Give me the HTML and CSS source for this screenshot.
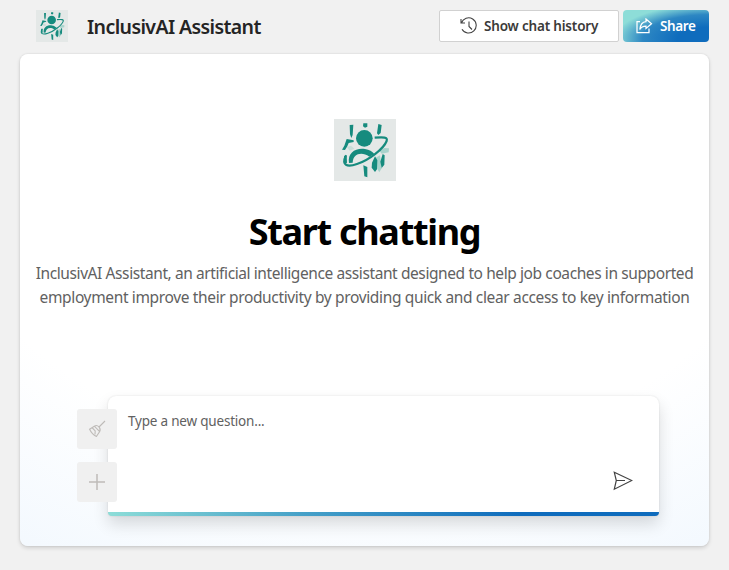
FILE: index.html
```html
<!DOCTYPE html>
<html lang="en">
<head>
<meta charset="utf-8">
<title>InclusivAI Assistant</title>
<link rel="stylesheet" href="styles.css">
</head>
<body>
<svg class="defs" width="0" height="0">
  <symbol id="logo" viewBox="0 0 186 186">
    <rect width="186" height="186" fill="#e4e8e7"/>
    <g fill="#a9d3cc">
      <path d="M151 87l14 1-1 12-21 4-7-9z"/>
      <path d="M124 117l14-8 5 39-7 12-13-21z"/>
      <path d="M39 84l12-4 10 9-14 6z" opacity=".5"/>
    </g>
    <g fill="#168b7e">
      <circle cx="91" cy="58" r="25"/>
      <path d="M47 18l11-1-2 31-4 9-4-11zM88 13h12v10l-7 3-6-4zM133 15l10 3-3 24-7 6-4-5zM38 60l21 4v5l-15 3-4 10-7 11-9-1 7-12zM30 112l8-3 1 22-7 4zM88 139l12 5v31l-9-3zM114 131l9-19 7 12-1 27-6 8-10-13zM146 105l6 4-1 28-8 10-4-19z"/>
      <path d="M45 132c-5-31 20-46 48-42 13 2 22 7 28 15l-15 8c-24-17-49-8-50 18z"/>
    </g>
    <path d="M36 109c-15 31 4 36 33 26 37-12 80-46 89-69 4-12-10-12-36-10" fill="none" stroke="#168b7e" stroke-width="6.5"/>
  </symbol>
</svg>
<header class="header">
  <svg class="brand-logo"><use href="#logo"/></svg>
  <h1 class="brand">InclusivAI Assistant</h1>
  <div class="actions">
    <button class="btn history">
      <svg width="18" height="18" viewBox="0 0 18 18" fill="none" stroke="#424242" stroke-width="1.1"><path d="M1 2v4h4M1.4 6A7.6 7.6 0 1 1 2 12.2M9 4.5v5l3 3"/></svg>
      <span>Show chat history</span>
    </button>
    <button class="btn share">
      <svg width="17" height="16" viewBox="0 0 17 16" fill="none" stroke="#fff" stroke-width="1.25"><path d="M4 3.5H1v11h12v-4M10 1l5.5 4.8L10 10.5V8C7 8 5 9 3.8 11.5 4.3 7 6.5 4 10 3.7z"/></svg>
      <span>Share</span>
    </button>
  </div>
</header>
<main class="panel">
  <svg class="hero-logo"><use href="#logo"/></svg>
  <h2 class="title">Start chatting</h2>
  <p class="description"><span class="line-one">InclusivAI Assistant, an artificial intelligence assistant designed to help job coaches in supported</span><br><span class="line-two">employment improve their productivity by providing quick and clear access to key information</span></p>
  <div class="composer">
    <div class="tools">
      <button class="tool"><svg width="18" height="18" viewBox="0 0 18 18" fill="none" stroke="#bebbb8" stroke-width="1.1"><path d="M17 1l-6 6M6.3 6.2c2-1.3 3.6-.5 4.6.6s1.8 2.7.8 4.8l-3.2 4.8C5.5 15 3 12.2 1.6 9.2zM6.3 6.2l5.4 5.4M4.4 8l2.8 2.9-.2 3.5"/></svg></button>
      <button class="tool"><svg width="16" height="16" viewBox="0 0 16 16" stroke="#bebbb8" stroke-width="1.5"><path d="M8 0v16M0 8h16"/></svg></button>
    </div>
    <div class="input">
      <span class="placeholder">Type a new question...</span>
      <svg class="send" width="20" height="20" viewBox="0 0 20 20" fill="none" stroke="#424242" stroke-width="1.2"><path d="M1.3 1.3l17.5 8.2L1.3 18.2l2-8.7zM3.3 9.5H12"/></svg>
    </div>
  </div>
</main>
</body>
</html>
```
FILE: styles.css
```css
* { box-sizing: border-box; }
body {
  margin: 0;
  width: 729px;
  height: 570px;
  padding: 0 20px 24px;
  background: #f1f1f1;
  display: flex;
  flex-direction: column;
  font-family: "Noto Sans", sans-serif;
  overflow: hidden;
}
.defs { position: absolute; }
button { border: 0; padding: 0; font: inherit; }
svg { flex: none; display: block; }
.header { height: 54px; display: flex; align-items: center; padding: 0 0 2px 16px; }
.brand-logo { width: 32px; height: 32px; }
.brand {
  margin: 2px 0 0 19px;
  font-size: 19.5px;
  font-weight: 600;
  line-height: 28px;
  letter-spacing: -0.6px;
  color: #242424;
  white-space: nowrap;
}
.actions { display: flex; gap: 4px; margin-left: auto; }
.btn {
  height: 32px;
  display: flex;
  align-items: center;
  font-size: 13.5px;
  font-weight: 600;
  line-height: 20px;
  white-space: nowrap;
}
.history {
  width: 180px;
  padding-left: 20px;
  gap: 6px;
  background: #fff;
  border: 1px solid #d1d1d1;
  border-radius: 2px;
  color: #3b3a39;
  letter-spacing: -0.18px;
}
.share {
  width: 86px;
  padding-left: 13px;
  gap: 7px;
  border-radius: 4px;
  color: #fff;
  letter-spacing: -0.36px;
  background: radial-gradient(109.81% 107.82% at 100.1% 90.19%, #0f6cbd 33.63%, #2d87c3 70.31%, #8dddd8 100%);
}
.panel {
  height: 492px;
  display: flex;
  flex-direction: column;
  align-items: center;
  padding-top: 65px;
  border-radius: 8px;
  background: radial-gradient(108.78% 108.78% at 50.02% 19.78%, #fff 57.29%, #eef6fe 100%);
  box-shadow: 0 2px 4px rgba(0, 0, 0, .14), 0 0 2px rgba(0, 0, 0, .12);
}
.hero-logo { width: 62px; height: 62px; }
.title {
  margin: 27px 0 0;
  font-size: 36px;
  font-weight: 700;
  line-height: 48px;
  letter-spacing: -1.3px;
  color: #000;
  white-space: nowrap;
}
.description {
  margin: 5px 0 0;
  font-size: 15.5px;
  line-height: 24px;
  text-align: center;
  white-space: nowrap;
  color: #616161;
}
.line-one { letter-spacing: -0.405px; }
.line-two { letter-spacing: -0.355px; }
.composer { display: flex; width: 582px; height: 120px; margin-top: 87px; margin-left: 7px; }
.tools { width: 31px; padding-top: 13px; display: flex; flex-direction: column; gap: 13px; z-index: 1; }
.tool {
  flex: none;
  width: 40px;
  height: 40px;
  display: flex;
  align-items: center;
  justify-content: center;
  border-radius: 3px;
  background: #f0f0f0;
}
.input {
  flex: 1;
  display: flex;
  justify-content: space-between;
  padding: 15px 26px 0 20px;
  border-radius: 8px 8px 4px 4px;
  background: linear-gradient(90deg, #8dddd8, #46a1c8 35%, #0f6cbd 75%) bottom / 100% 4px no-repeat, #fff;
  box-shadow: 0 8px 16px rgba(0, 0, 0, .14), 0 0 2px rgba(0, 0, 0, .12);
}
.placeholder { font-size: 13.5px; line-height: 20px; letter-spacing: -0.2px; color: #616161; }
.send { margin-top: 60px; }
```
